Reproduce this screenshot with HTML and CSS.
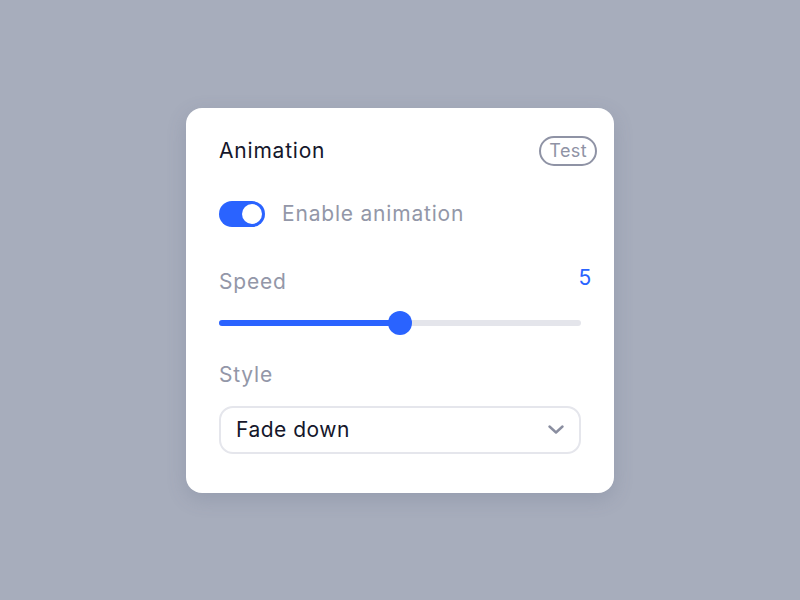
FILE: index.html
```html
<!DOCTYPE html>
<html lang="en">

<head>
  <meta charset="UTF-8">
  <meta name="viewport" content="width=device-width, initial-scale=1.0">
  <link rel="stylesheet" href="styles.css">
  <title>Animation settings</title>
</head>

<body>
  <section class="card">
    <header class="card-header">
      <h2 class="card-title">Animation</h2>
      <button class="badge">Test</button>
    </header>

    <label class="toggle-row">
      <span class="toggle"><span class="toggle-knob"></span></span>
      <span class="toggle-label">Enable animation</span>
    </label>

    <div class="field-head">
      <span class="field-label">Speed</span>
      <span class="field-value">5</span>
    </div>
    <div class="slider">
      <div class="slider-fill" style="width: 50%"></div>
      <div class="slider-thumb" style="left: 50%"></div>
    </div>

    <div class="field-head field-head-style">
      <span class="field-label">Style</span>
    </div>
    <div class="select">
      <span class="select-text">Fade down</span>
      <svg class="chevron" width="16" height="9" viewBox="0 0 16 9" fill="none">
        <path d="M1.5 1.5 8 7.5 14.5 1.5" stroke="currentColor" stroke-width="2.4" stroke-linecap="round" stroke-linejoin="round" />
      </svg>
    </div>
  </section>
</body>

</html>
```

FILE: styles.css
```css
* {
  box-sizing: border-box;
}

body {
  margin: 0;
  height: 600px;
  display: flex;
  align-items: center;
  justify-content: center;
  font-family: Inter, "Noto Sans", sans-serif;
  letter-spacing: 0.8px;
  background: #a7adbc;
  color: #15172b;
}

.card {
  width: 428px;
  height: 385px;
  padding: 28px 33px 0 33px;
  background: #fff;
  border-radius: 16px;
  box-shadow: 0 6px 20px hsl(225deg 20% 40% / 0.2);
}

.card-header {
  display: flex;
  align-items: center;
  justify-content: space-between;
  height: 30px;
  margin-right: -16px;
}

.card-title {
  margin: 0;
  font-size: 21px;
  font-weight: 400;
}

.badge {
  height: 30px;
  padding: 0 8px;
  border: 2px solid #8f93a5;
  border-radius: 15px;
  background: none;
  font-family: inherit;
  font-size: 18px;
  letter-spacing: 0.4px;
  color: #8f93a5;
}

.toggle-row {
  display: flex;
  align-items: center;
  gap: 17px;
  margin-top: 35px;
}

.toggle {
  display: flex;
  align-items: center;
  justify-content: flex-end;
  width: 46px;
  height: 26px;
  padding: 0 3px;
  border-radius: 13px;
  background: #2a63ff;
}

.toggle-knob {
  width: 20px;
  height: 20px;
  border-radius: 50%;
  background: #fff;
}

.toggle-label {
  font-size: 21px;
  color: #9397a8;
}

.field-head {
  display: flex;
  align-items: center;
  justify-content: space-between;
  height: 24px;
  margin-top: 43px;
  margin-right: -11px;
}

.field-head-style {
  margin-top: 37px;
}

.field-label {
  font-size: 21px;
  color: #9397a8;
}

.field-value {
  font-size: 21px;
  color: #2a63ff;
  transform: translateY(-4px);
}

.slider {
  position: relative;
  height: 6px;
  margin-top: 26px;
  border-radius: 3px;
  background: #e4e5eb;
}

.slider-fill {
  height: 100%;
  border-radius: 3px;
  background: #2a63ff;
}

.slider-thumb {
  position: absolute;
  top: 50%;
  width: 24px;
  height: 24px;
  margin: -12px 0 0 -12px;
  border-radius: 50%;
  background: #2a63ff;
}

.select {
  display: flex;
  align-items: center;
  justify-content: space-between;
  height: 48px;
  margin-top: 19px;
  padding: 0 15px;
  border: 2px solid #e5e6ec;
  border-radius: 14px;
}

.select-text {
  font-size: 21px;
  letter-spacing: 0.5px;
  color: #15172b;
}

.chevron {
  color: #8a8ea0;
}
```
